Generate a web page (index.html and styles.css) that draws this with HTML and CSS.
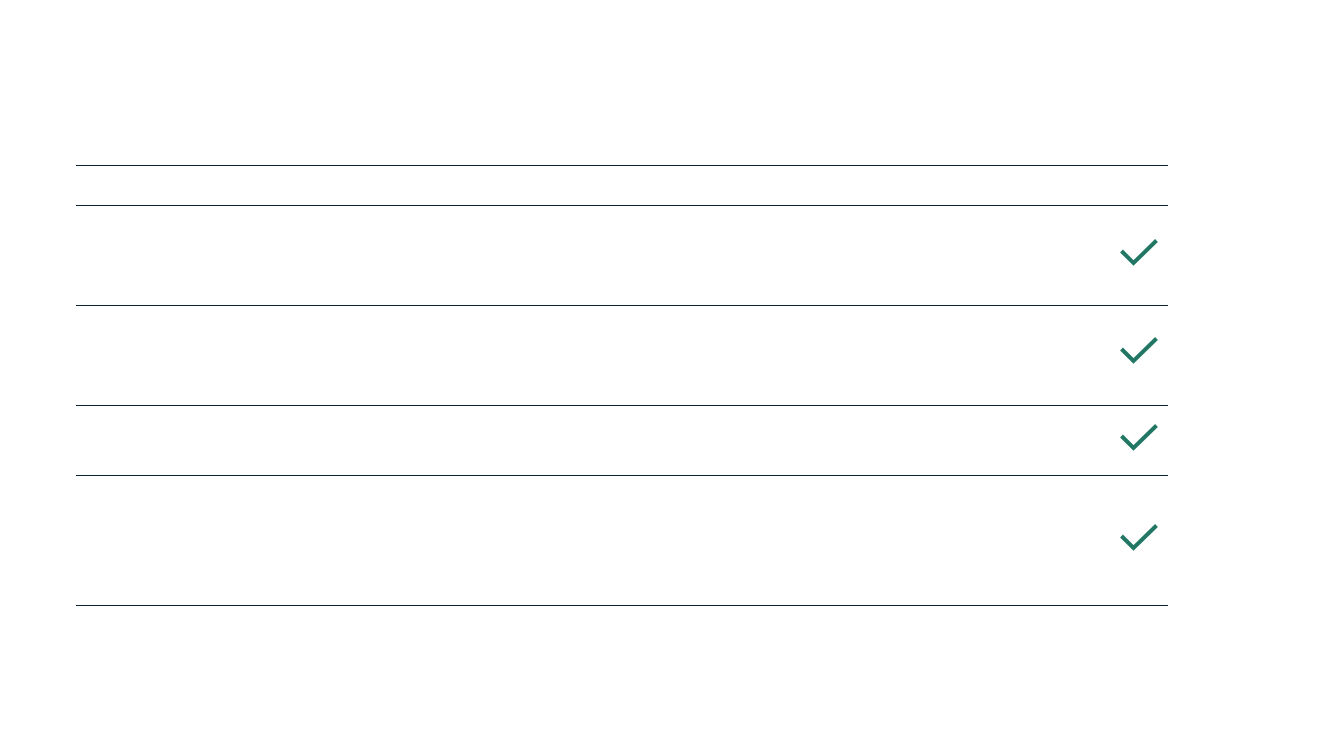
FILE: index.html
```html
<!DOCTYPE html>
<html lang="en">
<head>
<meta charset="utf-8">
<title>Comparison</title>
<link rel="stylesheet" href="styles.css">
</head>
<body>
<div class="table">
  <div class="row head"></div>
  <div class="row r100"><svg class="check" viewBox="0 0 38 27" width="38" height="27"><path d="M1.5 12 L13.5 24 L36.5 1.5"/></svg></div>
  <div class="row r100 raised"><svg class="check" viewBox="0 0 38 27" width="38" height="27"><path d="M1.5 12 L13.5 24 L36.5 1.5"/></svg></div>
  <div class="row r70"><svg class="check" viewBox="0 0 38 27" width="38" height="27"><path d="M1.5 12 L13.5 24 L36.5 1.5"/></svg></div>
  <div class="row r130"><svg class="check" viewBox="0 0 38 27" width="38" height="27"><path d="M1.5 12 L13.5 24 L36.5 1.5"/></svg></div>
</div>
</body>
</html>
```
FILE: styles.css
```css
html, body {
  margin: 0;
  padding: 0;
  background: #ffffff;
  font-family: "Liberation Sans", Arial, sans-serif;
}
.table {
  margin: 165px 0 0 76px;
  width: 1092px;
  border-top: 1px solid #0b2233;
}
.row {
  box-sizing: border-box;
  display: flex;
  align-items: center;
  justify-content: flex-end;
  padding: 0 10px 6px 0;
  border-bottom: 1px solid #0b2233;
}
.head { height: 40px; }
.r100 { height: 100px; }
.r70 { height: 70px; }
.r130 { height: 130px; }
.raised { padding-bottom: 10px; }
.check { display: block; }
.check path {
  fill: none;
  stroke: #217763;
  stroke-width: 4;
  stroke-linecap: butt;
  stroke-linejoin: miter;
}
```
